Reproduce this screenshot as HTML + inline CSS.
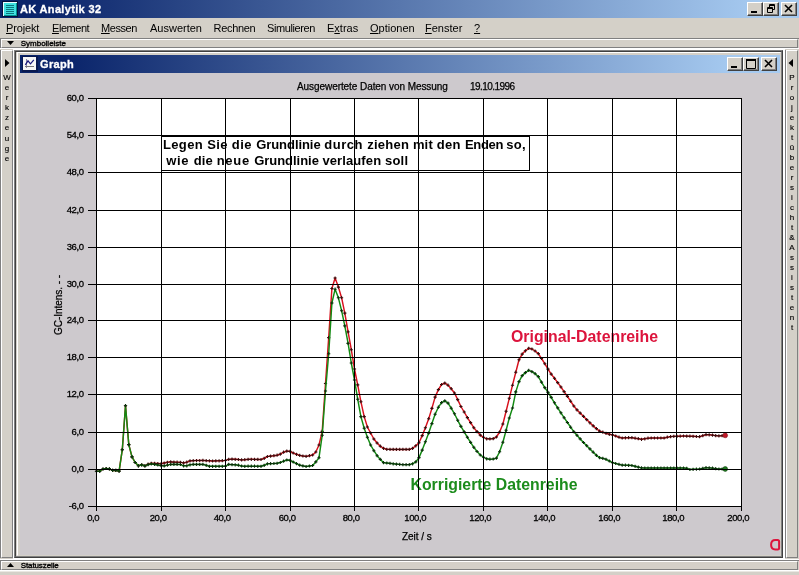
<!DOCTYPE html>
<html><head><meta charset="utf-8"><title>AK Analytik 32</title>
<style>
html,body{margin:0;padding:0}
body{width:799px;height:575px;overflow:hidden;background:#d4d0c8;position:relative;font-family:"Liberation Sans",sans-serif;font-size:11px;color:#000}
div,span{position:absolute;white-space:nowrap;box-sizing:border-box}
.tb{left:0;top:0;width:799px;height:18px;background:linear-gradient(90deg,#0a246a 0%,#0a246a 5%,#a6caf0 95%,#a6caf0 100%)}
.tt{left:20px;top:2px;color:#fff;font-weight:bold;font-size:11px;line-height:14px;letter-spacing:0.34px;-webkit-text-stroke:0.3px #fff}
.btn{width:16px;height:14px;background:#d4d0c8;border:1px solid;border-color:#fff #404040 #404040 #fff;box-shadow:inset -1px -1px 0 #808080}
.mi{top:22px;line-height:13px;font-size:11px}
.mi u{text-decoration:underline;text-underline-offset:1px}
.strip{background:#d4d0c8;border:1px solid;border-color:#fff #808080 #808080 #fff}
.sf{font-size:8px;line-height:8px;color:#000;-webkit-text-stroke:0.35px #000}
.vt{font-size:8px;line-height:8px;width:12px;text-align:center;color:#000;-webkit-text-stroke:0.15px #000}
.ax{-webkit-text-stroke:0.25px #000}
.tbx{left:0;top:0;width:0;height:0}
.tbx span{font-weight:bold;font-size:13px;line-height:16px}
.yl{-webkit-text-stroke:0.3px #000;left:37.6px;width:46px;text-align:right;line-height:14px;font-size:9.5px;letter-spacing:-0.4px}
.xl{-webkit-text-stroke:0.3px #000;width:40px;text-align:center;top:511.3px;line-height:14px;font-size:9.5px;letter-spacing:-0.4px}
</style></head><body><div id="root" style="left:0;top:0;width:799px;height:575px;will-change:transform;overflow:hidden">

<!-- main title bar -->
<div class="tb"></div>
<svg style="position:absolute;left:2px;top:1px" width="16" height="16" viewBox="-1 -1 16 16"><rect x="-1" y="-1" width="16" height="16" fill="#06103c"/><rect x="0" y="0" width="14" height="14" fill="#e8ffff"/><rect x="1" y="1" width="13" height="13" fill="#009090"/><rect x="1" y="1" width="12" height="12" fill="#40e0e0"/><path d="M3,3.5h8M3,5.5h8M3,7.5h8M3,9.5h8M3,11.5h8" stroke="#0a7880" stroke-width="1"/></svg>
<div class="tt">AK Analytik 32</div>
<div class="btn" style="left:747px;top:2px"></div>
<div class="btn" style="left:763px;top:2px"></div>
<div class="btn" style="left:781px;top:2px"></div>
<svg style="position:absolute;left:747px;top:2px" width="50" height="14" viewBox="0 0 50 14"><rect x="4" y="9" width="6" height="2" fill="#000"/><path d="M22.5,2.5h5v5h-2M22.5,3.5h5M22.5,2.5v3M20.5,5.500h5v5h-5zM20.5,6.5h5" stroke="#000" fill="none"/><path d="M38,3l7,7M45,3l-7,7" stroke="#000" stroke-width="1.6" fill="none"/></svg>

<!-- menu -->
<div class="mi" style="left:6px;letter-spacing:-0.15px"><u>P</u>rojekt</div>
<div class="mi" style="left:52px;letter-spacing:-0.45px"><u>E</u>lement</div>
<div class="mi" style="left:101px;letter-spacing:-0.45px"><u>M</u>essen</div>
<div class="mi" style="left:150px">Auswerten</div>
<div class="mi" style="left:213.5px;letter-spacing:-0.3px">Rechnen</div>
<div class="mi" style="left:267px;letter-spacing:-0.4px">Simulieren</div>
<div class="mi" style="left:327px">E<u>x</u>tras</div>
<div class="mi" style="left:370px"><u>O</u>ptionen</div>
<div class="mi" style="left:425px"><u>F</u>enster</div>
<div class="mi" style="left:474px"><u>?</u></div>

<!-- Symbolleiste strip -->
<div style="left:0;top:38px;width:799px;height:1px;background:#808080"></div>
<div style="left:0;top:38px;width:1px;height:10px;background:#808080"></div>
<div class="strip" style="left:1px;top:39px;width:797px;height:9px"></div>
<svg style="position:absolute;left:7px;top:41px" width="8" height="5"><path d="M0,0h7l-3.5,4z" fill="#000"/></svg>
<div class="sf" style="left:20.7px;top:39.5px">Symbolleiste</div>

<div style="left:0;top:48px;width:799px;height:1px;background:#fff"></div>
<div style="left:0;top:559px;width:799px;height:1px;background:#fff"></div>
<!-- left strip -->
<div style="left:0;top:50px;width:1px;height:508px;background:#808080"></div>
<div class="strip" style="left:1px;top:50px;width:12px;height:508px"></div>
<svg style="position:absolute;left:5px;top:59px" width="5" height="8"><path d="M0,0v8l4.5,-4z" fill="#000"/></svg>
<div class="vt" style="left:1px;top:73px;line-height:10.1px">W<br>e<br>r<br>k<br>z<br>e<br>u<br>g<br>e</div>

<!-- right strip -->
<div style="left:785px;top:50px;width:1px;height:508px;background:#808080"></div>
<div class="strip" style="left:786px;top:50px;width:12px;height:508px"></div>
<svg style="position:absolute;left:788px;top:59px" width="5" height="8"><path d="M5,0v8l-4.5,-4z" fill="#000"/></svg>
<div class="vt" style="left:786px;top:73px;line-height:9.98px">P<br>r<br>o<br>j<br>e<br>k<br>t<br>ü<br>b<br>e<br>r<br>s<br>i<br>c<br>h<br>t<br>&amp;<br>A<br>s<br>s<br>i<br>s<br>t<br>e<br>n<br>t</div>

<!-- MDI area + child window -->
<div style="left:13px;top:48px;width:772px;height:512px;background:#fff"></div>
<div style="left:14px;top:50px;width:769px;height:508px;background:#d4d0c8;border:1px solid;border-color:#808080 #404040 #404040 #808080"></div>
<div style="left:15px;top:51px;width:767px;height:506px;border:1px solid;border-color:#404040 #808080 #808080 #404040"></div>
<div style="left:17px;top:52px;width:764px;height:504px;border:1px solid;border-color:#fff #d4d0c8 #d4d0c8 #fff"></div>
<div style="left:20px;top:55px;width:760px;height:500px;background:#cdc9cd"></div>
<div style="left:20px;top:55px;width:760px;height:18px;background:linear-gradient(90deg,#0a246a 0%,#0a246a 6%,#a6caf0 94%,#a6caf0 100%)"></div>
<svg style="position:absolute;left:22px;top:56px" width="16" height="16" viewBox="0 0 16 16"><rect x="0" y="0" width="16" height="16" fill="#081850"/><rect x="1" y="1" width="13" height="13" fill="#f6f6f6"/><path d="M4.5,3v9" stroke="#8a86a8" stroke-width="1"/><path d="M3,10.5h9" stroke="#77757a" stroke-width="1"/><path d="M3.3,8.8L6,4.8L8.5,7.8L11.8,3.8" stroke="#18187c" stroke-width="1.2" fill="none"/></svg>
<div class="tt" style="left:40px;top:57px">Graph</div>
<div class="btn" style="left:727px;top:57px"></div>
<div class="btn" style="left:743px;top:57px"></div>
<div class="btn" style="left:761px;top:57px"></div>
<svg style="position:absolute;left:727px;top:57px" width="50" height="14" viewBox="0 0 50 14"><rect x="4" y="9" width="6" height="2" fill="#000"/><path d="M19.5,3h9v8.500h-9z" stroke="#000" fill="none"/><path d="M19,3h10" stroke="#000" stroke-width="2"/><path d="M38,3l7,7M45,3l-7,7" stroke="#000" stroke-width="1.6" fill="none"/></svg>

<!-- chart -->
<svg width="799" height="575" viewBox="0 0 799 575" style="position:absolute;left:0;top:0">
<rect x="96.5" y="98.5" width="645.0" height="408.0" fill="#fff"/>
<rect x="161.5" y="135.5" width="368" height="35" fill="#fff" stroke="#000" stroke-width="1" shape-rendering="crispEdges"/>
<line x1="161" y1="136.5" x2="530" y2="136.5" stroke="#000" stroke-width="1" shape-rendering="crispEdges"/>
<polyline points="96.5,471.2 99.7,471.2 103.0,469.0 106.2,468.5 109.4,468.9 112.6,470.4 115.8,470.4 119.1,471.1 122.3,449.7 125.5,405.7 128.8,444.6 132.0,456.9 135.2,462.5 138.4,465.8 141.7,464.8 144.9,465.9 148.1,464.2 151.3,463.3 154.6,463.4 157.8,463.5 161.0,463.8 164.2,463.0 167.4,462.3 170.7,461.9 173.9,462.1 177.1,462.2 180.4,462.4 183.6,462.9 186.8,462.2 190.0,460.9 193.2,460.6 196.5,460.5 199.7,460.5 202.9,460.4 206.2,460.6 209.4,460.8 212.6,461.0 215.8,460.9 219.1,460.8 222.3,460.7 225.5,460.4 228.7,459.4 232.0,459.1 235.2,459.3 238.4,459.5 241.6,459.9 244.8,459.8 248.1,459.4 251.3,459.3 254.5,459.4 257.8,459.4 261.0,459.5 264.2,458.3 267.4,456.5 270.6,456.1 273.9,455.7 277.1,455.2 280.3,454.1 283.6,452.2 286.8,451.1 290.0,451.4 293.2,453.0 296.5,454.3 299.7,455.4 302.9,456.0 306.1,456.4 309.4,455.7 312.6,455.0 315.8,452.0 319.0,445.0 322.2,431.4 325.5,383.5 328.7,337.6 331.9,288.5 335.1,278.0 338.4,287.1 341.6,297.7 344.8,313.1 348.1,331.9 351.3,349.7 354.5,369.0 357.7,384.9 360.9,401.7 364.2,416.6 367.4,427.0 370.6,433.0 373.9,439.0 377.1,443.0 380.3,446.2 383.5,448.3 386.8,449.3 390.0,449.4 393.2,449.4 396.4,449.4 399.7,449.4 402.9,449.4 406.1,449.4 409.3,449.4 412.6,448.4 415.8,445.8 419.0,442.7 422.2,435.6 425.4,427.8 428.7,418.7 431.9,408.4 435.1,397.1 438.4,389.6 441.6,384.5 444.8,383.1 448.0,385.2 451.2,388.7 454.5,393.0 457.7,399.6 460.9,406.5 464.2,412.0 467.4,417.6 470.6,422.6 473.8,427.7 477.1,431.6 480.3,435.1 483.5,437.3 486.7,438.8 489.9,438.9 493.2,438.6 496.4,437.0 499.6,432.0 502.9,424.0 506.1,411.3 509.3,398.3 512.5,385.2 515.8,372.2 519.0,359.8 522.2,354.1 525.4,350.8 528.7,348.3 531.9,349.0 535.1,351.0 538.3,353.6 541.5,358.5 544.8,363.7 548.0,369.1 551.2,374.1 554.5,378.3 557.7,382.6 560.9,387.0 564.1,391.6 567.4,396.4 570.6,401.2 573.8,406.0 577.0,409.9 580.2,413.1 583.5,416.4 586.7,419.6 589.9,422.8 593.2,425.9 596.4,428.6 599.6,431.1 602.8,432.2 606.0,433.3 609.3,434.3 612.5,434.9 615.7,436.0 619.0,437.2 622.2,438.0 625.4,437.8 628.6,437.7 631.9,437.6 635.1,438.2 638.3,438.7 641.5,439.3 644.8,438.8 648.0,438.2 651.2,438.0 654.4,438.0 657.6,438.0 660.9,438.0 664.1,438.0 667.3,437.2 670.6,436.6 673.8,436.4 677.0,436.3 680.2,436.2 683.5,436.0 686.7,436.1 689.9,436.2 693.1,436.3 696.4,436.5 699.6,436.6 702.8,435.7 706.0,434.6 709.2,434.8 712.5,435.1 715.7,435.6 718.9,435.9 722.1,435.7 725.4,435.4" fill="none" stroke="#d8101c" stroke-width="1.45" stroke-linejoin="round"/>
<path d="M94.9,471.2h3.2M96.5,469.6v3.2M98.1,471.2h3.2M99.7,469.6v3.2M101.4,469.0h3.2M103.0,467.4v3.2M104.6,468.5h3.2M106.2,466.9v3.2M107.8,468.9h3.2M109.4,467.3v3.2M111.0,470.4h3.2M112.6,468.8v3.2M114.2,470.4h3.2M115.8,468.8v3.2M117.5,471.1h3.2M119.1,469.5v3.2M120.7,449.7h3.2M122.3,448.1v3.2M123.9,405.7h3.2M125.5,404.1v3.2M127.2,444.6h3.2M128.8,443.0v3.2M130.4,456.9h3.2M132.0,455.3v3.2M133.6,462.5h3.2M135.2,460.9v3.2M136.8,465.8h3.2M138.4,464.2v3.2M140.1,464.8h3.2M141.7,463.2v3.2M143.3,465.9h3.2M144.9,464.3v3.2M146.5,464.2h3.2M148.1,462.6v3.2M149.7,463.3h3.2M151.3,461.7v3.2M153.0,463.4h3.2M154.6,461.8v3.2M156.2,463.5h3.2M157.8,461.9v3.2M159.4,463.8h3.2M161.0,462.2v3.2M162.6,463.0h3.2M164.2,461.4v3.2M165.8,462.3h3.2M167.4,460.7v3.2M169.1,461.9h3.2M170.7,460.3v3.2M172.3,462.1h3.2M173.9,460.5v3.2M175.5,462.2h3.2M177.1,460.6v3.2M178.8,462.4h3.2M180.4,460.8v3.2M182.0,462.9h3.2M183.6,461.3v3.2M185.2,462.2h3.2M186.8,460.6v3.2M188.4,460.9h3.2M190.0,459.3v3.2M191.7,460.6h3.2M193.2,459.0v3.2M194.9,460.5h3.2M196.5,458.9v3.2M198.1,460.5h3.2M199.7,458.9v3.2M201.3,460.4h3.2M202.9,458.8v3.2M204.6,460.6h3.2M206.2,459.0v3.2M207.8,460.8h3.2M209.4,459.2v3.2M211.0,461.0h3.2M212.6,459.4v3.2M214.2,460.9h3.2M215.8,459.3v3.2M217.5,460.8h3.2M219.1,459.2v3.2M220.7,460.7h3.2M222.3,459.1v3.2M223.9,460.4h3.2M225.5,458.8v3.2M227.1,459.4h3.2M228.7,457.8v3.2M230.4,459.1h3.2M232.0,457.5v3.2M233.6,459.3h3.2M235.2,457.7v3.2M236.8,459.5h3.2M238.4,457.9v3.2M240.0,459.9h3.2M241.6,458.3v3.2M243.2,459.8h3.2M244.8,458.1v3.2M246.5,459.4h3.2M248.1,457.8v3.2M249.7,459.3h3.2M251.3,457.7v3.2M252.9,459.4h3.2M254.5,457.8v3.2M256.1,459.4h3.2M257.8,457.8v3.2M259.4,459.5h3.2M261.0,457.9v3.2M262.6,458.3h3.2M264.2,456.7v3.2M265.8,456.5h3.2M267.4,454.9v3.2M269.0,456.1h3.2M270.6,454.5v3.2M272.3,455.7h3.2M273.9,454.1v3.2M275.5,455.2h3.2M277.1,453.6v3.2M278.7,454.1h3.2M280.3,452.5v3.2M281.9,452.2h3.2M283.6,450.6v3.2M285.2,451.1h3.2M286.8,449.5v3.2M288.4,451.4h3.2M290.0,449.8v3.2M291.6,453.0h3.2M293.2,451.4v3.2M294.9,454.3h3.2M296.5,452.7v3.2M298.1,455.4h3.2M299.7,453.8v3.2M301.3,456.0h3.2M302.9,454.4v3.2M304.5,456.4h3.2M306.1,454.8v3.2M307.8,455.7h3.2M309.4,454.1v3.2M311.0,455.0h3.2M312.6,453.4v3.2M314.2,452.0h3.2M315.8,450.4v3.2M317.4,445.0h3.2M319.0,443.4v3.2M320.6,431.4h3.2M322.2,429.8v3.2M323.9,383.5h3.2M325.5,381.9v3.2M327.1,337.6h3.2M328.7,336.0v3.2M330.3,288.5h3.2M331.9,286.9v3.2M333.5,278.0h3.2M335.1,276.4v3.2M336.8,287.1h3.2M338.4,285.5v3.2M340.0,297.7h3.2M341.6,296.1v3.2M343.2,313.1h3.2M344.8,311.5v3.2M346.4,331.9h3.2M348.1,330.3v3.2M349.7,349.7h3.2M351.3,348.1v3.2M352.9,369.0h3.2M354.5,367.4v3.2M356.1,384.9h3.2M357.7,383.3v3.2M359.3,401.7h3.2M360.9,400.1v3.2M362.6,416.6h3.2M364.2,415.0v3.2M365.8,427.0h3.2M367.4,425.4v3.2M369.0,433.0h3.2M370.6,431.4v3.2M372.2,439.0h3.2M373.9,437.4v3.2M375.5,443.0h3.2M377.1,441.4v3.2M378.7,446.2h3.2M380.3,444.6v3.2M381.9,448.3h3.2M383.5,446.7v3.2M385.1,449.3h3.2M386.8,447.7v3.2M388.4,449.4h3.2M390.0,447.8v3.2M391.6,449.4h3.2M393.2,447.8v3.2M394.8,449.4h3.2M396.4,447.8v3.2M398.1,449.4h3.2M399.7,447.8v3.2M401.3,449.4h3.2M402.9,447.8v3.2M404.5,449.4h3.2M406.1,447.8v3.2M407.7,449.4h3.2M409.3,447.8v3.2M410.9,448.4h3.2M412.6,446.8v3.2M414.2,445.8h3.2M415.8,444.2v3.2M417.4,442.7h3.2M419.0,441.1v3.2M420.6,435.6h3.2M422.2,434.0v3.2M423.8,427.8h3.2M425.4,426.2v3.2M427.1,418.7h3.2M428.7,417.1v3.2M430.3,408.4h3.2M431.9,406.8v3.2M433.5,397.1h3.2M435.1,395.5v3.2M436.8,389.6h3.2M438.4,388.0v3.2M440.0,384.5h3.2M441.6,382.9v3.2M443.2,383.1h3.2M444.8,381.5v3.2M446.4,385.2h3.2M448.0,383.6v3.2M449.6,388.7h3.2M451.2,387.1v3.2M452.9,393.0h3.2M454.5,391.4v3.2M456.1,399.6h3.2M457.7,398.0v3.2M459.3,406.5h3.2M460.9,404.9v3.2M462.6,412.0h3.2M464.2,410.4v3.2M465.8,417.6h3.2M467.4,416.0v3.2M469.0,422.6h3.2M470.6,421.0v3.2M472.2,427.7h3.2M473.8,426.1v3.2M475.4,431.6h3.2M477.1,430.0v3.2M478.7,435.1h3.2M480.3,433.5v3.2M481.9,437.3h3.2M483.5,435.7v3.2M485.1,438.8h3.2M486.7,437.2v3.2M488.3,438.9h3.2M489.9,437.3v3.2M491.6,438.6h3.2M493.2,437.0v3.2M494.8,437.0h3.2M496.4,435.4v3.2M498.0,432.0h3.2M499.6,430.4v3.2M501.2,424.0h3.2M502.9,422.4v3.2M504.5,411.3h3.2M506.1,409.7v3.2M507.7,398.3h3.2M509.3,396.7v3.2M510.9,385.2h3.2M512.5,383.6v3.2M514.1,372.2h3.2M515.8,370.6v3.2M517.4,359.8h3.2M519.0,358.2v3.2M520.6,354.1h3.2M522.2,352.5v3.2M523.8,350.8h3.2M525.4,349.2v3.2M527.1,348.3h3.2M528.7,346.7v3.2M530.3,349.0h3.2M531.9,347.4v3.2M533.5,351.0h3.2M535.1,349.4v3.2M536.7,353.6h3.2M538.3,352.0v3.2M539.9,358.5h3.2M541.5,356.9v3.2M543.2,363.7h3.2M544.8,362.1v3.2M546.4,369.1h3.2M548.0,367.5v3.2M549.6,374.1h3.2M551.2,372.5v3.2M552.9,378.3h3.2M554.5,376.7v3.2M556.1,382.6h3.2M557.7,381.0v3.2M559.3,387.0h3.2M560.9,385.4v3.2M562.5,391.6h3.2M564.1,390.0v3.2M565.8,396.4h3.2M567.4,394.8v3.2M569.0,401.2h3.2M570.6,399.6v3.2M572.2,406.0h3.2M573.8,404.4v3.2M575.4,409.9h3.2M577.0,408.3v3.2M578.6,413.1h3.2M580.2,411.5v3.2M581.9,416.4h3.2M583.5,414.8v3.2M585.1,419.6h3.2M586.7,418.0v3.2M588.3,422.8h3.2M589.9,421.2v3.2M591.6,425.9h3.2M593.2,424.3v3.2M594.8,428.6h3.2M596.4,427.0v3.2M598.0,431.1h3.2M599.6,429.5v3.2M601.2,432.2h3.2M602.8,430.6v3.2M604.4,433.3h3.2M606.0,431.7v3.2M607.7,434.3h3.2M609.3,432.7v3.2M610.9,434.9h3.2M612.5,433.3v3.2M614.1,436.0h3.2M615.7,434.4v3.2M617.4,437.2h3.2M619.0,435.6v3.2M620.6,438.0h3.2M622.2,436.4v3.2M623.8,437.8h3.2M625.4,436.2v3.2M627.0,437.7h3.2M628.6,436.1v3.2M630.2,437.6h3.2M631.9,436.0v3.2M633.5,438.2h3.2M635.1,436.6v3.2M636.7,438.7h3.2M638.3,437.1v3.2M639.9,439.3h3.2M641.5,437.7v3.2M643.1,438.8h3.2M644.8,437.2v3.2M646.4,438.2h3.2M648.0,436.6v3.2M649.6,438.0h3.2M651.2,436.4v3.2M652.8,438.0h3.2M654.4,436.4v3.2M656.0,438.0h3.2M657.6,436.4v3.2M659.3,438.0h3.2M660.9,436.4v3.2M662.5,438.0h3.2M664.1,436.4v3.2M665.7,437.2h3.2M667.3,435.6v3.2M669.0,436.6h3.2M670.6,435.0v3.2M672.2,436.4h3.2M673.8,434.8v3.2M675.4,436.3h3.2M677.0,434.7v3.2M678.6,436.2h3.2M680.2,434.6v3.2M681.9,436.0h3.2M683.5,434.4v3.2M685.1,436.1h3.2M686.7,434.5v3.2M688.3,436.2h3.2M689.9,434.6v3.2M691.5,436.3h3.2M693.1,434.7v3.2M694.8,436.5h3.2M696.4,434.9v3.2M698.0,436.6h3.2M699.6,435.0v3.2M701.2,435.7h3.2M702.8,434.1v3.2M704.4,434.6h3.2M706.0,433.0v3.2M707.6,434.8h3.2M709.2,433.2v3.2M710.9,435.1h3.2M712.5,433.5v3.2M714.1,435.6h3.2M715.7,434.0v3.2M717.3,435.9h3.2M718.9,434.3v3.2M720.5,435.7h3.2M722.1,434.1v3.2M723.8,435.4h3.2M725.4,433.8v3.2" stroke="#3a0a0a" stroke-width="1.1" fill="none"/>
<polyline points="96.5,471.2 99.7,471.2 103.0,469.0 106.2,468.5 109.4,468.9 112.6,470.4 115.8,470.4 119.1,471.1 122.3,449.7 125.5,405.7 128.8,444.6 132.0,456.9 135.2,462.5 138.4,465.8 141.7,464.8 144.9,465.9 148.1,464.6 151.3,464.0 154.6,464.5 157.8,465.0 161.0,465.6 164.2,465.9 167.4,465.1 170.7,464.4 173.9,464.4 177.1,464.4 180.4,464.5 183.6,465.8 186.8,465.8 190.0,464.8 193.2,464.4 196.5,464.4 199.7,464.4 202.9,464.4 206.2,465.3 209.4,466.3 212.6,466.3 215.8,466.3 219.1,466.3 222.3,466.3 225.5,466.1 228.7,464.4 232.0,464.6 235.2,464.8 238.4,465.2 241.6,466.0 244.8,466.3 248.1,466.2 251.3,466.2 254.5,466.2 257.8,466.3 261.0,466.3 264.2,465.3 267.4,463.8 270.6,463.6 273.9,463.5 277.1,463.3 280.3,462.5 283.6,461.2 286.8,460.0 290.0,460.3 293.2,462.0 296.5,463.6 299.7,465.1 302.9,465.9 306.1,466.5 309.4,466.0 312.6,465.5 315.8,461.9 319.0,457.7 322.2,435.3 325.5,391.0 328.7,353.7 331.9,303.0 335.1,289.2 338.4,297.8 341.6,310.7 344.8,325.9 348.1,343.4 351.3,363.0 354.5,380.0 357.7,399.2 360.9,416.6 364.2,428.2 367.4,437.3 370.6,445.0 373.9,450.7 377.1,455.7 380.3,459.4 383.5,462.6 386.8,463.0 390.0,463.4 393.2,463.8 396.4,464.1 399.7,464.4 402.9,464.6 406.1,464.6 409.3,464.6 412.6,463.8 415.8,461.9 419.0,457.6 422.2,450.1 425.4,441.8 428.7,433.1 431.9,423.6 435.1,414.2 438.4,407.2 441.6,402.6 444.8,400.9 448.0,403.1 451.2,408.2 454.5,413.8 457.7,420.3 460.9,426.4 464.2,431.9 467.4,437.3 470.6,442.4 473.8,447.3 477.1,451.5 480.3,455.0 483.5,457.2 486.7,458.8 489.9,459.2 493.2,459.0 496.4,458.1 499.6,451.7 502.9,442.3 506.1,430.3 509.3,418.0 512.5,408.0 515.8,391.9 519.0,381.6 522.2,375.6 525.4,372.6 528.7,370.3 531.9,371.6 535.1,373.7 538.3,376.6 541.5,382.1 544.8,387.6 548.0,392.4 551.2,397.4 554.5,402.8 557.7,407.9 560.9,412.8 564.1,417.7 567.4,422.5 570.6,427.2 573.8,431.7 577.0,435.3 580.2,438.9 583.5,442.5 586.7,445.7 589.9,448.9 593.2,452.2 596.4,455.3 599.6,457.7 602.8,458.4 606.0,459.3 609.3,461.0 612.5,462.6 615.7,463.5 619.0,464.4 622.2,465.1 625.4,465.2 628.6,465.3 631.9,465.5 635.1,466.3 638.3,467.1 641.5,467.9 644.8,468.0 648.0,468.0 651.2,468.0 654.4,468.0 657.6,468.0 660.9,468.0 664.1,468.0 667.3,468.0 670.6,468.0 673.8,468.0 677.0,468.0 680.2,468.0 683.5,468.0 686.7,468.3 689.9,469.5 693.1,469.3 696.4,469.2 699.6,469.0 702.8,468.4 706.0,467.7 709.2,467.9 712.5,468.1 715.7,468.6 718.9,469.0 722.1,469.0 725.4,469.0" fill="none" stroke="#128a12" stroke-width="1.45" stroke-linejoin="round"/>
<path d="M94.9,471.2h3.2M96.5,469.6v3.2M98.1,471.2h3.2M99.7,469.6v3.2M101.4,469.0h3.2M103.0,467.4v3.2M104.6,468.5h3.2M106.2,466.9v3.2M107.8,468.9h3.2M109.4,467.3v3.2M111.0,470.4h3.2M112.6,468.8v3.2M114.2,470.4h3.2M115.8,468.8v3.2M117.5,471.1h3.2M119.1,469.5v3.2M120.7,449.7h3.2M122.3,448.1v3.2M123.9,405.7h3.2M125.5,404.1v3.2M127.2,444.6h3.2M128.8,443.0v3.2M130.4,456.9h3.2M132.0,455.3v3.2M133.6,462.5h3.2M135.2,460.9v3.2M136.8,465.8h3.2M138.4,464.2v3.2M140.1,464.8h3.2M141.7,463.2v3.2M143.3,465.9h3.2M144.9,464.3v3.2M146.5,464.6h3.2M148.1,463.0v3.2M149.7,464.0h3.2M151.3,462.4v3.2M153.0,464.5h3.2M154.6,462.9v3.2M156.2,465.0h3.2M157.8,463.4v3.2M159.4,465.6h3.2M161.0,464.0v3.2M162.6,465.9h3.2M164.2,464.3v3.2M165.8,465.1h3.2M167.4,463.5v3.2M169.1,464.4h3.2M170.7,462.8v3.2M172.3,464.4h3.2M173.9,462.8v3.2M175.5,464.4h3.2M177.1,462.8v3.2M178.8,464.5h3.2M180.4,462.9v3.2M182.0,465.8h3.2M183.6,464.2v3.2M185.2,465.8h3.2M186.8,464.2v3.2M188.4,464.8h3.2M190.0,463.2v3.2M191.7,464.4h3.2M193.2,462.8v3.2M194.9,464.4h3.2M196.5,462.8v3.2M198.1,464.4h3.2M199.7,462.8v3.2M201.3,464.4h3.2M202.9,462.8v3.2M204.6,465.3h3.2M206.2,463.7v3.2M207.8,466.3h3.2M209.4,464.7v3.2M211.0,466.3h3.2M212.6,464.7v3.2M214.2,466.3h3.2M215.8,464.7v3.2M217.5,466.3h3.2M219.1,464.7v3.2M220.7,466.3h3.2M222.3,464.7v3.2M223.9,466.1h3.2M225.5,464.4v3.2M227.1,464.4h3.2M228.7,462.8v3.2M230.4,464.6h3.2M232.0,463.0v3.2M233.6,464.8h3.2M235.2,463.2v3.2M236.8,465.2h3.2M238.4,463.6v3.2M240.0,466.0h3.2M241.6,464.4v3.2M243.2,466.3h3.2M244.8,464.7v3.2M246.5,466.2h3.2M248.1,464.6v3.2M249.7,466.2h3.2M251.3,464.6v3.2M252.9,466.2h3.2M254.5,464.6v3.2M256.1,466.3h3.2M257.8,464.7v3.2M259.4,466.3h3.2M261.0,464.7v3.2M262.6,465.3h3.2M264.2,463.7v3.2M265.8,463.8h3.2M267.4,462.2v3.2M269.0,463.6h3.2M270.6,462.0v3.2M272.3,463.5h3.2M273.9,461.9v3.2M275.5,463.3h3.2M277.1,461.7v3.2M278.7,462.5h3.2M280.3,460.9v3.2M281.9,461.2h3.2M283.6,459.6v3.2M285.2,460.0h3.2M286.8,458.4v3.2M288.4,460.3h3.2M290.0,458.7v3.2M291.6,462.0h3.2M293.2,460.4v3.2M294.9,463.6h3.2M296.5,462.0v3.2M298.1,465.1h3.2M299.7,463.5v3.2M301.3,465.9h3.2M302.9,464.3v3.2M304.5,466.5h3.2M306.1,464.9v3.2M307.8,466.0h3.2M309.4,464.4v3.2M311.0,465.5h3.2M312.6,463.9v3.2M314.2,461.9h3.2M315.8,460.3v3.2M317.4,457.7h3.2M319.0,456.1v3.2M320.6,435.3h3.2M322.2,433.7v3.2M323.9,391.0h3.2M325.5,389.4v3.2M327.1,353.7h3.2M328.7,352.1v3.2M330.3,303.0h3.2M331.9,301.4v3.2M333.5,289.2h3.2M335.1,287.6v3.2M336.8,297.8h3.2M338.4,296.2v3.2M340.0,310.7h3.2M341.6,309.1v3.2M343.2,325.9h3.2M344.8,324.3v3.2M346.4,343.4h3.2M348.1,341.8v3.2M349.7,363.0h3.2M351.3,361.4v3.2M352.9,380.0h3.2M354.5,378.4v3.2M356.1,399.2h3.2M357.7,397.6v3.2M359.3,416.6h3.2M360.9,415.0v3.2M362.6,428.2h3.2M364.2,426.6v3.2M365.8,437.3h3.2M367.4,435.7v3.2M369.0,445.0h3.2M370.6,443.4v3.2M372.2,450.7h3.2M373.9,449.1v3.2M375.5,455.7h3.2M377.1,454.1v3.2M378.7,459.4h3.2M380.3,457.8v3.2M381.9,462.6h3.2M383.5,461.0v3.2M385.1,463.0h3.2M386.8,461.4v3.2M388.4,463.4h3.2M390.0,461.8v3.2M391.6,463.8h3.2M393.2,462.2v3.2M394.8,464.1h3.2M396.4,462.5v3.2M398.1,464.4h3.2M399.7,462.8v3.2M401.3,464.6h3.2M402.9,463.0v3.2M404.5,464.6h3.2M406.1,463.0v3.2M407.7,464.6h3.2M409.3,463.0v3.2M410.9,463.8h3.2M412.6,462.2v3.2M414.2,461.9h3.2M415.8,460.3v3.2M417.4,457.6h3.2M419.0,456.0v3.2M420.6,450.1h3.2M422.2,448.5v3.2M423.8,441.8h3.2M425.4,440.2v3.2M427.1,433.1h3.2M428.7,431.5v3.2M430.3,423.6h3.2M431.9,422.0v3.2M433.5,414.2h3.2M435.1,412.6v3.2M436.8,407.2h3.2M438.4,405.6v3.2M440.0,402.6h3.2M441.6,401.0v3.2M443.2,400.9h3.2M444.8,399.3v3.2M446.4,403.1h3.2M448.0,401.5v3.2M449.6,408.2h3.2M451.2,406.6v3.2M452.9,413.8h3.2M454.5,412.2v3.2M456.1,420.3h3.2M457.7,418.7v3.2M459.3,426.4h3.2M460.9,424.8v3.2M462.6,431.9h3.2M464.2,430.3v3.2M465.8,437.3h3.2M467.4,435.7v3.2M469.0,442.4h3.2M470.6,440.8v3.2M472.2,447.3h3.2M473.8,445.7v3.2M475.4,451.5h3.2M477.1,449.9v3.2M478.7,455.0h3.2M480.3,453.4v3.2M481.9,457.2h3.2M483.5,455.6v3.2M485.1,458.8h3.2M486.7,457.2v3.2M488.3,459.2h3.2M489.9,457.6v3.2M491.6,459.0h3.2M493.2,457.4v3.2M494.8,458.1h3.2M496.4,456.5v3.2M498.0,451.7h3.2M499.6,450.1v3.2M501.2,442.3h3.2M502.9,440.7v3.2M504.5,430.3h3.2M506.1,428.7v3.2M507.7,418.0h3.2M509.3,416.4v3.2M510.9,408.0h3.2M512.5,406.4v3.2M514.1,391.9h3.2M515.8,390.3v3.2M517.4,381.6h3.2M519.0,380.0v3.2M520.6,375.6h3.2M522.2,374.0v3.2M523.8,372.6h3.2M525.4,371.0v3.2M527.1,370.3h3.2M528.7,368.7v3.2M530.3,371.6h3.2M531.9,370.0v3.2M533.5,373.7h3.2M535.1,372.1v3.2M536.7,376.6h3.2M538.3,375.0v3.2M539.9,382.1h3.2M541.5,380.5v3.2M543.2,387.6h3.2M544.8,386.0v3.2M546.4,392.4h3.2M548.0,390.8v3.2M549.6,397.4h3.2M551.2,395.8v3.2M552.9,402.8h3.2M554.5,401.2v3.2M556.1,407.9h3.2M557.7,406.3v3.2M559.3,412.8h3.2M560.9,411.2v3.2M562.5,417.7h3.2M564.1,416.1v3.2M565.8,422.5h3.2M567.4,420.9v3.2M569.0,427.2h3.2M570.6,425.6v3.2M572.2,431.7h3.2M573.8,430.1v3.2M575.4,435.3h3.2M577.0,433.7v3.2M578.6,438.9h3.2M580.2,437.3v3.2M581.9,442.5h3.2M583.5,440.9v3.2M585.1,445.7h3.2M586.7,444.1v3.2M588.3,448.9h3.2M589.9,447.3v3.2M591.6,452.2h3.2M593.2,450.6v3.2M594.8,455.3h3.2M596.4,453.7v3.2M598.0,457.7h3.2M599.6,456.1v3.2M601.2,458.4h3.2M602.8,456.8v3.2M604.4,459.3h3.2M606.0,457.7v3.2M607.7,461.0h3.2M609.3,459.4v3.2M610.9,462.6h3.2M612.5,461.0v3.2M614.1,463.5h3.2M615.7,461.9v3.2M617.4,464.4h3.2M619.0,462.8v3.2M620.6,465.1h3.2M622.2,463.5v3.2M623.8,465.2h3.2M625.4,463.6v3.2M627.0,465.3h3.2M628.6,463.7v3.2M630.2,465.5h3.2M631.9,463.9v3.2M633.5,466.3h3.2M635.1,464.7v3.2M636.7,467.1h3.2M638.3,465.5v3.2M639.9,467.9h3.2M641.5,466.3v3.2M643.1,468.0h3.2M644.8,466.4v3.2M646.4,468.0h3.2M648.0,466.4v3.2M649.6,468.0h3.2M651.2,466.4v3.2M652.8,468.0h3.2M654.4,466.4v3.2M656.0,468.0h3.2M657.6,466.4v3.2M659.3,468.0h3.2M660.9,466.4v3.2M662.5,468.0h3.2M664.1,466.4v3.2M665.7,468.0h3.2M667.3,466.4v3.2M669.0,468.0h3.2M670.6,466.4v3.2M672.2,468.0h3.2M673.8,466.4v3.2M675.4,468.0h3.2M677.0,466.4v3.2M678.6,468.0h3.2M680.2,466.4v3.2M681.9,468.0h3.2M683.5,466.4v3.2M685.1,468.3h3.2M686.7,466.7v3.2M688.3,469.5h3.2M689.9,467.9v3.2M691.5,469.3h3.2M693.1,467.7v3.2M694.8,469.2h3.2M696.4,467.6v3.2M698.0,469.0h3.2M699.6,467.4v3.2M701.2,468.4h3.2M702.8,466.8v3.2M704.4,467.7h3.2M706.0,466.1v3.2M707.6,467.9h3.2M709.2,466.3v3.2M710.9,468.1h3.2M712.5,466.5v3.2M714.1,468.6h3.2M715.7,467.0v3.2M717.3,469.0h3.2M718.9,467.4v3.2M720.5,469.0h3.2M722.1,467.4v3.2M723.8,469.0h3.2M725.4,467.4v3.2" stroke="#0a300a" stroke-width="1.1" fill="none"/>
<circle cx="725.2" cy="435.4" r="2.4" fill="#c01828" stroke="#801018" stroke-width="0.6"/>
<circle cx="725.2" cy="469" r="2.4" fill="#207a20" stroke="#0a400a" stroke-width="0.6"/>
<text x="511" y="342" font-family="Liberation Sans, sans-serif" font-weight="bold" font-size="16" fill="#dc143c" textLength="147" lengthAdjust="spacingAndGlyphs">Original-Datenreihe</text>
<text x="410.5" y="490" font-family="Liberation Sans, sans-serif" font-weight="bold" font-size="16" fill="#1c8c1c" textLength="167" lengthAdjust="spacingAndGlyphs">Korrigierte Datenreihe</text>
<path d="M96.5,98.0V511.0M161.5,98.0V511.0M225.5,98.0V511.0M290.5,98.0V511.0M354.5,98.0V511.0M418.5,98.0V511.0M483.5,98.0V511.0M547.5,98.0V511.0M612.5,98.0V511.0M676.5,98.0V511.0M741.5,98.0V511.0M88.0,98.5H742.0M88.0,135.5H742.0M88.0,172.5H742.0M88.0,210.5H742.0M88.0,247.5H742.0M88.0,284.5H742.0M88.0,320.5H742.0M88.0,357.5H742.0M88.0,394.5H742.0M88.0,432.5H742.0M88.0,469.5H742.0M88.0,506.5H742.0" stroke="#000" stroke-width="1" fill="none" shape-rendering="crispEdges"/>
</svg>
<div class="ax" style="left:297px;top:79.5px;line-height:14px;font-size:10px;letter-spacing:-0.07px">Ausgewertete Daten von Messung</div>
<div class="ax" style="left:470px;top:79.5px;line-height:14px;font-size:10px;letter-spacing:-0.55px">19.10.1996</div>
<div class="yl" style="top:91.1px">60,0</div>
<div class="yl" style="top:128.1px">54,0</div>
<div class="yl" style="top:165.1px">48,0</div>
<div class="yl" style="top:203.1px">42,0</div>
<div class="yl" style="top:240.1px">36,0</div>
<div class="yl" style="top:277.1px">30,0</div>
<div class="yl" style="top:313.1px">24,0</div>
<div class="yl" style="top:350.1px">18,0</div>
<div class="yl" style="top:387.1px">12,0</div>
<div class="yl" style="top:425.1px">6,0</div>
<div class="yl" style="top:462.1px">0,0</div>
<div class="yl" style="top:499.1px">-6,0</div>
<div class="xl" style="left:73.2px">0,0</div>
<div class="xl" style="left:138.2px">20,0</div>
<div class="xl" style="left:202.2px">40,0</div>
<div class="xl" style="left:267.2px">60,0</div>
<div class="xl" style="left:331.2px">80,0</div>
<div class="xl" style="left:395.2px">100,0</div>
<div class="xl" style="left:460.2px">120,0</div>
<div class="xl" style="left:524.2px">140,0</div>
<div class="xl" style="left:589.2px">160,0</div>
<div class="xl" style="left:653.2px">180,0</div>
<div class="xl" style="left:718.2px">200,0</div>
<div class="ax" style="left:402px;top:530px;line-height:14px;font-size:10px;letter-spacing:-0.05px">Zeit / s</div>
<div style="left:51.5px;top:298px;width:14px;height:14px;line-height:14px;font-size:10px;letter-spacing:-0.04px;-webkit-text-stroke:0.25px #000;transform:rotate(-90deg);transform-origin:center;text-align:center;overflow:visible"><span style="position:relative;display:inline-block;transform:translateX(-50%);left:50%">GC-Intens. - -</span></div>
<div class="tbx">
<span style="left:162.9px;top:136.9px;letter-spacing:0.39px">Legen</span>
<span style="left:207.2px;top:136.9px;letter-spacing:0.34px">Sie</span>
<span style="left:231.7px;top:136.9px;letter-spacing:0.52px">die</span>
<span style="left:256.2px;top:136.9px;letter-spacing:-0.06px">Grundlinie</span>
<span style="left:324.2px;top:136.9px;letter-spacing:0.54px">durch</span>
<span style="left:367.2px;top:136.9px;letter-spacing:0.24px">ziehen</span>
<span style="left:412.9px;top:136.9px;letter-spacing:0.16px">mit</span>
<span style="left:436.7px;top:136.9px;letter-spacing:0.38px">den</span>
<span style="left:464.9px;top:136.9px;letter-spacing:-0.30px">Enden</span>
<span style="left:506.2px;top:136.9px;letter-spacing:0.32px">so,</span>
<span style="left:166.2px;top:153.1px;letter-spacing:0.73px">wie</span>
<span style="left:193.7px;top:153.1px;letter-spacing:0.14px">die</span>
<span style="left:216.7px;top:153.1px;letter-spacing:0.71px">neue</span>
<span style="left:254.2px;top:153.1px;letter-spacing:-0.03px">Grundlinie</span>
<span style="left:322.4px;top:153.1px;letter-spacing:0.11px">verlaufen</span>
<span style="left:384.9px;top:153.1px;letter-spacing:0.27px">soll</span>
</div>

<!-- red clipped O -->
<svg style="position:absolute;left:766px;top:535px" width="16" height="20" viewBox="766 535 16 20"><path d="M777.6,540.1H775.3Q771.1,540.1 771.1,544.8Q771.1,549.5 775.3,549.5H777.6Q779.1,549.5 779.1,548V541.6Q779.1,540.1 777.6,540.1Z" fill="none" stroke="#dc143c" stroke-width="2"/></svg>

<!-- status strip -->
<div style="left:0;top:560px;width:799px;height:1px;background:#808080"></div>
<div style="left:0;top:560px;width:1px;height:10px;background:#808080"></div>
<div class="strip" style="left:1px;top:561px;width:797px;height:9px"></div>
<svg style="position:absolute;left:7px;top:563px" width="8" height="5"><path d="M0,4h7l-3.5,-4z" fill="#000"/></svg>
<div class="sf" style="left:20.7px;top:561.5px;letter-spacing:-0.1px">Statuszeile</div>
<div style="left:0;top:570px;width:799px;height:1px;background:#fff"></div>
<div style="left:0;top:571px;width:799px;height:1px;background:#ebe8e3"></div>
</div></body></html>
